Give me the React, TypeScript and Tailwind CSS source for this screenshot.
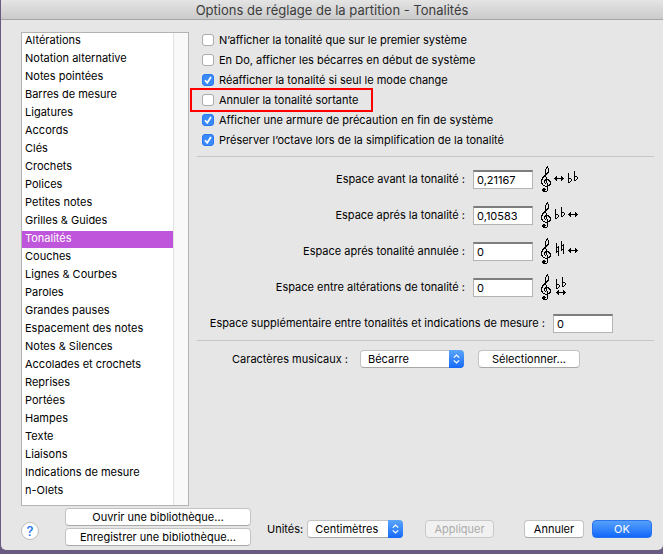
import React from "react";

const categories = [
  "Altérations", "Notation alternative", "Notes pointées", "Barres de mesure", "Ligatures", "Accords",
  "Clés", "Crochets", "Polices", "Petites notes", "Grilles & Guides", "Tonalités", "Couches",
  "Lignes & Courbes", "Paroles", "Grandes pauses", "Espacement des notes", "Notes & Silences",
  "Accolades et crochets", "Reprises", "Portées", "Hampes", "Texte", "Liaisons",
  "Indications de mesure", "n-Olets",
];

const options = [
  { id: "premier", label: "N’afficher la tonalité que sur le premier système", checked: false },
  { id: "do", label: "En Do, afficher les bécarres en début de système", checked: false },
  { id: "mode", label: "Réafficher la tonalité si seul le mode change", checked: true },
  { id: "annuler", label: "Annuler la tonalité sortante", checked: false, highlighted: true },
  { id: "armure", label: "Afficher une armure de précaution en fin de système", checked: true },
  { id: "octave", label: "Préserver l’octave lors de la simplification de la tonalité", checked: true },
];

type Glyph = "clef" | "arrow" | "flats" | "naturals";
type Part = { glyph: Glyph; x: number; y: number };

const spacings: { id: string; label: string; value: string; parts: Part[] }[] = [
  { id: "avant", label: "Espace avant la tonalité :", value: "0,21167", parts: [{ glyph: "arrow", x: 14, y: 10 }, { glyph: "flats", x: 28, y: 5 }] },
  { id: "apres", label: "Espace aprés la tonalité :", value: "0,10583", parts: [{ glyph: "flats", x: 15, y: 5 }, { glyph: "arrow", x: 28, y: 10 }] },
  { id: "annulee", label: "Espace aprés tonalité annulée :", value: "0", parts: [{ glyph: "naturals", x: 16, y: 3 }, { glyph: "arrow", x: 28, y: 10 }] },
  { id: "entre", label: "Espace entre altérations de tonalité :", value: "0", parts: [{ glyph: "flats", x: 16, y: 3 }, { glyph: "arrow", x: 16, y: 16 }] },
];

// One-bit pixel drawings, one string per row.
const bitmaps: Record<Glyph, string[]> = {
  clef: [
    "......#...",
    ".....##...",
    ".....#.#..",
    "....#..#..",
    "....#..#..",
    "....#..#..",
    "....#.##..",
    "....###...",
    "....##....",
    "...##.....",
    "..###.....",
    ".##..#....",
    ".#...#....",
    "##..####..",
    "#..###.##.",
    "#..#.#..##",
    "#..#.#...#",
    "##..#.#..#",
    ".#....#.##",
    "..##..###.",
    "....###...",
    "......#...",
    "..##..#...",
    ".####.#...",
    ".###..#...",
    "..####....",
  ],
  arrow: [
    "..#....#..",
    ".##....##.",
    "##########",
    ".##....##.",
    "..#....#..",
  ],
  flats: [
    "......#...",
    "......#...",
    "#.....#...",
    "#.....#...",
    "#.....#...",
    "#.....###.",
    "#.....#..#",
    "###...#..#",
    "#..#..#.#.",
    "#..#..##..",
    "#.#.......",
    "##........",
  ],
  naturals: [
    ".....#..",
    ".....#..",
    "#....#..",
    "#....#.#",
    "#....###",
    "#.#..#.#",
    "###..#.#",
    "#.#..#.#",
    "#.#..###",
    "#.#..#.#",
    "###....#",
    "#.#....#",
    "..#....#",
    "..#.....",
    "..#.....",
  ],
};

function toPath(rows: string[]) {
  return rows
    .flatMap((row, y) => [...row].map((c, x) => (c === "#" ? `M${x} ${y}h1v1h-1z` : "")))
    .join("");
}

function Staff({ parts }: { parts: Part[] }) {
  const all: Part[] = [{ glyph: "clef", x: 1, y: 0 }, ...parts];
  return (
    <svg width="42" height="26" viewBox="0 0 42 26" fill="#000" shapeRendering="crispEdges" aria-hidden="true">
      {all.map((p) => (
        <path key={p.glyph} d={toPath(bitmaps[p.glyph])} transform={`translate(${p.x} ${p.y})`} />
      ))}
    </svg>
  );
}

function PopUp({ id, options: items, className }: { id: string; options: string[]; className: string }) {
  return (
    <div className={`relative h-[18px] ${className}`}>
      <select id={id} className="h-full w-full appearance-none rounded-[4px] border border-[#c3c3c3] border-b-[#a8a8a8] bg-white pr-5 pl-[7px] leading-4 outline-none">
        {items.map((o) => <option key={o}>{o}</option>)}
      </select>
      <span className="pointer-events-none absolute inset-y-0 right-0 flex w-[15px] items-center justify-center rounded-r-[4px] bg-linear-to-b from-[#5ba5fb] to-[#1268f8]">
        <svg width="7" height="10" viewBox="0 0 7 10" fill="none" stroke="#fff" strokeWidth="1.2">
          <path d="M0.8 3.6L3.5 1L6.2 3.6M0.8 6.4L3.5 9L6.2 6.4" />
        </svg>
      </span>
    </div>
  );
}

const buttonBase = "flex h-[18px] items-center justify-center rounded-[4px] border leading-4";
const plainButton = `${buttonBase} border-[#c3c3c3] border-b-[#a8a8a8] bg-white`;
const fieldClass = "h-[19px] w-[60px] border border-[#b4b4b4] border-t-2 border-t-[#7d7d7d] bg-white px-[3px] leading-4 outline-none";

export default function App() {
  return (
    <div className="bg-[#685a80] pb-1 pl-px font-['Inter','Liberation_Sans',sans-serif] text-[11px] leading-4 text-black">
      <div className="overflow-hidden rounded-b-[5px] bg-[#e6e6e6]">
        <header className="flex h-5 items-center justify-center border-b border-[#a5a5a5] bg-linear-to-b from-[#e4e4e4] to-[#cbcbcb]">
          <h1 className="text-[13px] leading-4 text-[#3c3c3c]">Options de réglage de la partition - Tonalités</h1>
        </header>

        <main className="flex gap-2 pt-3 pr-[9px] pl-5">
          <div className="flex h-[474px] w-[168px] shrink-0 border border-[#b3b3b3] bg-white">
            <ul role="listbox" aria-label="Catégories" className="flex-1">
              {categories.map((c) => (
                <li
                  key={c}
                  role="option"
                  aria-selected={c === "Tonalités"}
                  className="mb-px h-[17px] pl-[3px] leading-[14px] aria-selected:bg-[#bf55da] aria-selected:text-white"
                >
                  {c}
                </li>
              ))}
            </ul>
            <div className="w-[15px] border-l border-[#e2e2e2] bg-[#f9f9f9]" />
          </div>

          <div className="min-w-0 flex-1">
            <div className="pl-[5px]">
              {options.map((o) => (
                <div key={o.id} className="relative flex h-5 items-start">
                  {o.highlighted && <span className="pointer-events-none absolute -top-1 -left-3 h-6 w-[183px] border-2 border-[#ff0000]" />}
                  <span className="relative mt-0.5 mr-[5px] size-3">
                    <input
                      id={o.id}
                      type="checkbox"
                      defaultChecked={o.checked}
                      className="peer block size-3 appearance-none rounded-[3px] border border-[#ababab] bg-white checked:border-[#2a78f5] checked:bg-[#3b8af9]"
                    />
                    <svg className="pointer-events-none absolute inset-0 hidden peer-checked:block" width="12" height="12" viewBox="0 0 12 12" fill="none" stroke="#fff" strokeWidth="1.7">
                      <path d="M3 6.3L5.2 8.8L9 3" />
                    </svg>
                  </span>
                  <label htmlFor={o.id}>{o.label}</label>
                </div>
              ))}
            </div>

            <div className="mt-1 border-y border-[#c6c6c6] pt-[9px] pb-[7px]">
              {spacings.map((s) => (
                <div key={s.id} className="flex h-9 items-start">
                  <label htmlFor={s.id} className="mt-[5px] w-[268px] text-right">{s.label}</label>
                  <input id={s.id} type="text" defaultValue={s.value} className={`mt-1 ml-2 ${fieldClass}`} />
                  <span className="ml-[7px]"><Staff parts={s.parts} /></span>
                </div>
              ))}
              <div className="flex items-start">
                <label htmlFor="supp" className="mt-[5px] w-[348px] text-right whitespace-nowrap">Espace supplémentaire entre tonalités et indications de mesure :</label>
                <input id="supp" type="text" defaultValue="0" className={`mt-1 ml-2 ${fieldClass}`} />
              </div>
            </div>

            <div className="mt-[9px] flex items-center">
              <label htmlFor="caracteres" className="w-[151px] text-right">Caractères musicaux :</label>
              <PopUp id="caracteres" options={["Bécarre", "Bémol", "Dièse"]} className="ml-3 w-[104px]" />
              <button type="button" className={`ml-3.5 w-[102px] ${plainButton}`}>Sélectionner...</button>
            </div>
          </div>
        </main>

        <footer className="flex h-11 items-start pt-0.5 pr-[11px] pl-5">
          <button type="button" aria-label="Aide" className="mt-3.5 size-[18px] rounded-full border border-[#bdbdbd] bg-white text-[13px] leading-4 font-medium text-[#1a73f0]">?</button>
          <div className="ml-[26px] flex w-[186px] flex-col gap-0.5">
            <button type="button" className={plainButton}>Ouvrir une bibliothèque…</button>
            <button type="button" className={plainButton}>Enregistrer une bibliothèque…</button>
          </div>
          <div className="mt-3 flex flex-1 items-center pl-4">
            <label htmlFor="unites">Unités:</label>
            <PopUp id="unites" options={["Centimètres", "Pouces", "Points"]} className="ml-1 w-24" />
            <button type="button" disabled className={`ml-auto w-[69px] border-[#c9c9c9] bg-[#f1f1f1] text-[#ababab] ${buttonBase}`}>Appliquer</button>
            <button type="button" className={`ml-[30px] w-[60px] ${plainButton}`}>Annuler</button>
            <button type="button" className={`ml-2 w-[60px] border-[#2b74ee] bg-linear-to-b from-[#56a0fb] to-[#1067fa] text-white ${buttonBase}`}>OK</button>
          </div>
        </footer>
      </div>
    </div>
  );
}
